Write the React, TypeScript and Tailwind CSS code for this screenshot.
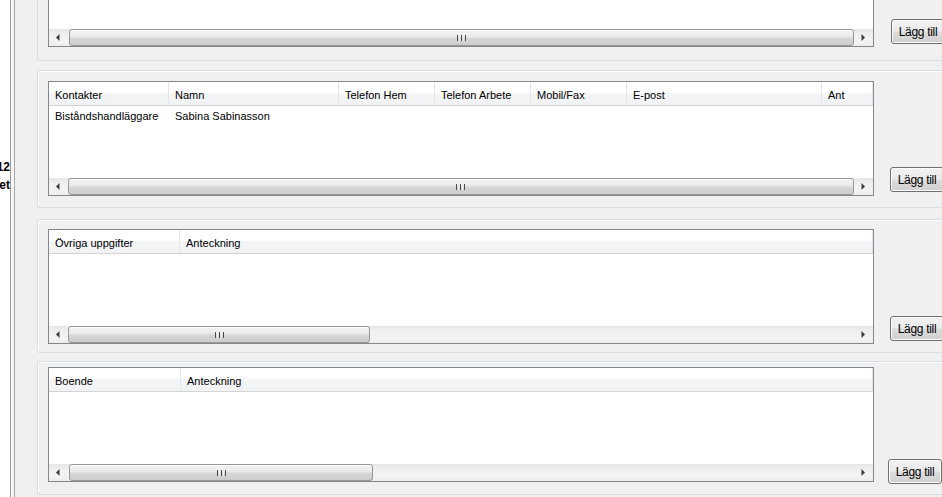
import type { ReactNode } from 'react';

type Col = { label: string; w: string };

const contactCols: Col[] = [
  { label: 'Kontakter', w: 'w-[120px]' },
  { label: 'Namn', w: 'w-[170px]' },
  { label: 'Telefon Hem', w: 'w-[96px]' },
  { label: 'Telefon Arbete', w: 'w-[96px]' },
  { label: 'Mobil/Fax', w: 'w-[96px]' },
  { label: 'E-post', w: 'w-[195px]' },
  { label: 'Ant', w: 'flex-1' },
];

const ovrigaCols: Col[] = [
  { label: 'Övriga uppgifter', w: 'w-[131px]' },
  { label: 'Anteckning', w: 'flex-1' },
];

const boendeCols: Col[] = [
  { label: 'Boende', w: 'w-[132px]' },
  { label: 'Anteckning', w: 'flex-1' },
];

function Arrow({ dir }: { dir: 'left' | 'right' }) {
  return (
    <svg width="4" height="7" viewBox="0 0 4 7">
      {dir === 'left' ? (
        <path d="M3.5 0 L0 3.5 L3.5 7 Z" fill="#3c3c3c" />
      ) : (
        <path d="M0.5 0 L4 3.5 L0.5 7 Z" fill="#3c3c3c" />
      )}
    </svg>
  );
}

function Grip() {
  return (
    <div className="flex gap-px">
      <span className="h-[6px] w-px bg-[#4a4a4a]" />
      <span className="h-[6px] w-px bg-[#f0f0f0]" />
      <span className="h-[6px] w-px bg-[#4a4a4a]" />
      <span className="h-[6px] w-px bg-[#f0f0f0]" />
      <span className="h-[6px] w-px bg-[#4a4a4a]" />
    </div>
  );
}

function HScroll({ thumb }: { thumb: string }) {
  return (
    <div className="flex h-[17px] bg-[linear-gradient(#e6e6e6,#f0f0f0_30%,#f3f3f3_70%,#ececec)]">
      <div className="flex w-[18px] items-center justify-center">
        <Arrow dir="left" />
      </div>
      <div className="flex flex-1">
        <div
          className={`${thumb} flex items-center justify-center rounded-[3px] border border-[#979797] bg-[linear-gradient(#f4f4f4,#e9e9e9_45%,#d6d6d6_55%,#cdcdcd)] shadow-[inset_0_1px_0_#fff]`}
        >
          <Grip />
        </div>
      </div>
      <div className="flex w-[20px] items-center justify-center">
        <Arrow dir="right" />
      </div>
    </div>
  );
}

function Header({ cols }: { cols: Col[] }) {
  return (
    <div className="flex h-[24px] border-b border-[#d5d5d5] bg-[linear-gradient(#ffffff_0%,#ffffff_45%,#f4f5f7_50%,#f1f2f4_100%)]">
      {cols.map((c) => (
        <div
          key={c.label}
          className={`${c.w} flex shrink-0 items-center border-r border-[#e3e6ea] pl-[6px] pt-[3px] whitespace-nowrap`}
        >
          {c.label}
        </div>
      ))}
    </div>
  );
}

function ListTable({ cols, rows, thumb }: { cols: Col[]; rows?: string[][]; thumb: string }) {
  return (
    <div className="flex h-[115px] w-[826px] shrink-0 flex-col border border-[#828790] bg-white">
      <Header cols={cols} />
      <div className="flex-1 pt-[3px]">
        {rows?.map((r, i) => (
          <div key={i} className="flex h-[15px] items-center">
            {r.map((cell, j) => (
              <div key={j} className={`${cols[j].w} shrink-0 pl-[6px] whitespace-nowrap`}>
                {cell}
              </div>
            ))}
          </div>
        ))}
      </div>
      <HScroll thumb={thumb} />
    </div>
  );
}

function AddButton({ className }: { className: string }) {
  return (
    <button
      className={`${className} flex h-[25px] w-[54px] shrink-0 items-center justify-center rounded-[3px] border border-[#707070] bg-[linear-gradient(#f2f2f2,#ebebeb_48%,#dddddd_52%,#cfcfcf)] text-[12px] tracking-[-0.3px] text-black shadow-[inset_0_0_0_1px_#fcfcfc]`}
    >
      Lägg till
    </button>
  );
}

function GroupBox({ className, children }: { className: string; children: ReactNode }) {
  return (
    <div
      className={`${className} flex items-end rounded-l-[3px] border border-r-0 border-[#d5dfe5] pl-[10px] shadow-[inset_1px_1px_0_#fff]`}
    >
      {children}
    </div>
  );
}

export default function App() {
  return (
    <div className="flex h-[497px] w-[942px] overflow-hidden bg-[#f0f0f0] font-['Liberation_Sans',Arial,sans-serif] text-[11px] text-black">
      <div className="flex h-full shrink-0">
        <div className="flex w-[10px] flex-col items-end overflow-hidden bg-white pt-[158px] text-[12px] leading-[18px] font-bold">
          <span className="whitespace-nowrap">12</span>
          <span className="whitespace-nowrap">et</span>
        </div>
        <div className="w-px bg-[#9c9c9c]" />
        <div className="w-[3px] bg-[#f7f7f7]" />
        <div className="w-px bg-[#a8a8a8]" />
      </div>

      <div className="ml-[22px] flex flex-1 flex-col">
        {/* top panel, cut off above */}
        <div className="flex h-[61px] items-end rounded-bl-[3px] border-b border-l border-[#d5dfe5] pb-[13px] pl-[10px]">
          <div className="flex h-[47px] w-[826px] shrink-0 flex-col border-x border-b border-[#828790] bg-white">
            <div className="flex-1" />
            <HScroll thumb="w-[785px] ml-[2px]" />
          </div>
          <AddButton className="mb-[3px] ml-[17px]" />
        </div>

        <GroupBox className="mt-[9px] h-[138px] pb-[11px]">
          <ListTable
            cols={contactCols}
            rows={[['Biståndshandläggare', 'Sabina Sabinasson']]}
            thumb="w-[786px] ml-px"
          />
          <AddButton className="mb-[4px] ml-[16px]" />
        </GroupBox>

        <GroupBox className="mt-[11px] h-[134px] pb-[8px]">
          <ListTable cols={ovrigaCols} thumb="w-[302px] ml-px" />
          <AddButton className="mb-[3px] ml-[16px]" />
        </GroupBox>

        <GroupBox className="mt-[8px] h-[134px] pb-[12px]">
          <ListTable cols={boendeCols} thumb="w-[304px] ml-[2px]" />
          <AddButton className="mb-[-2px] ml-[14px]" />
        </GroupBox>
      </div>
    </div>
  );
}
